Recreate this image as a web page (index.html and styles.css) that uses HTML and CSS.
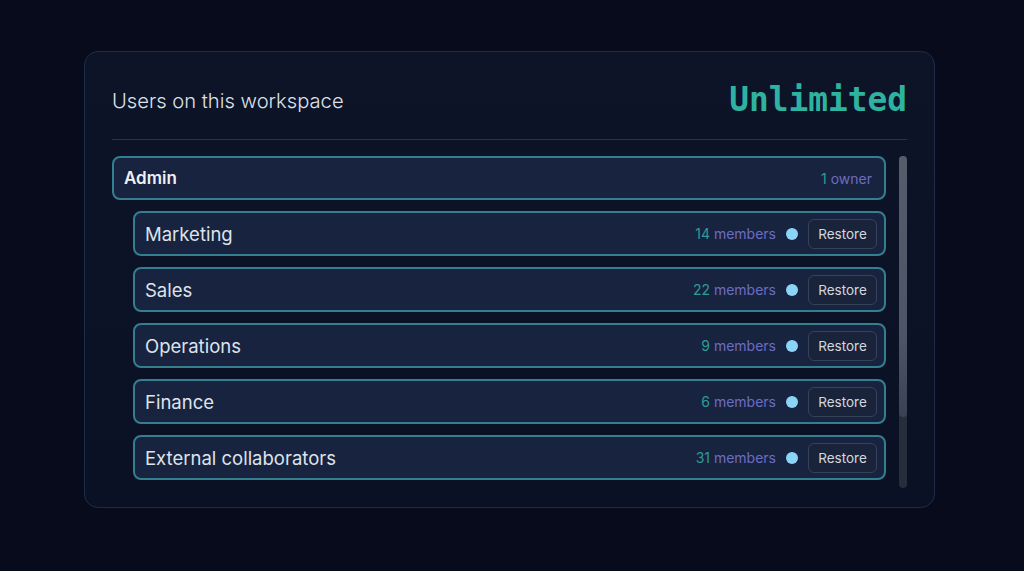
FILE: index.html
```html
<!DOCTYPE html>
<html lang="en">
<head>
    <meta charset="UTF-8">
    <meta name="viewport" content="width=device-width, initial-scale=1.0">
    <title>Workspace users</title>
    <link rel="stylesheet" href="styles.css">
</head>
<body>
    <div class="card">
        <div class="card-head">
            <h2>Users on this workspace</h2>
            <span class="limit">Unlimited</span>
        </div>
        <div class="list-wrap">
            <div class="list">
                <div class="row row-admin">
                    <span class="name">Admin</span>
                    <span class="count"><b>1</b> owner</span>
                </div>
                <div class="row row-group">
                    <span class="name">Marketing</span>
                    <span class="count"><b>14</b> members</span>
                    <i class="dot"></i>
                    <button class="restore">Restore</button>
                </div>
                <div class="row row-group">
                    <span class="name">Sales</span>
                    <span class="count"><b>22</b> members</span>
                    <i class="dot"></i>
                    <button class="restore">Restore</button>
                </div>
                <div class="row row-group">
                    <span class="name">Operations</span>
                    <span class="count"><b>9</b> members</span>
                    <i class="dot"></i>
                    <button class="restore">Restore</button>
                </div>
                <div class="row row-group">
                    <span class="name">Finance</span>
                    <span class="count"><b>6</b> members</span>
                    <i class="dot"></i>
                    <button class="restore">Restore</button>
                </div>
                <div class="row row-group">
                    <span class="name">External collaborators</span>
                    <span class="count"><b>31</b> members</span>
                    <i class="dot"></i>
                    <button class="restore">Restore</button>
                </div>
            </div>
            <div class="track">
                <div class="thumb"></div>
            </div>
        </div>
    </div>
</body>
</html>
```

FILE: styles.css
```css
*{
    padding: 0;
    margin: 0;
    box-sizing: border-box;
}
body{
    width: 1024px;
    height: 571px;
    background-color: #070b1b;
    font-family: Inter, "Noto Sans", sans-serif;
    padding-top: 51px;
    padding-left: 84px;
}
i{
    font-style: normal;
}
.card{
    width: 851px;
    height: 457px;
    padding: 27px 27px 0 27px;
    border: 1px solid #202c46;
    border-radius: 14px;
    background: linear-gradient(180deg, #0d1428 0%, #0b1124 100%);
}
.card-head{
    height: 61px;
    display: flex;
    align-items: center;
    justify-content: space-between;
    border-bottom: 1px solid #1d3a4a;
    padding-bottom: 18px;
}
.card-head h2{
    font-size: 20.2px;
    font-weight: 300;
    color: #dde1e8;
}
.limit{
    font-family: "DejaVu Sans Mono", monospace;
    font-size: 32.8px;
    font-weight: bold;
    color: #2fb3a1;
}
.list-wrap{
    display: flex;
    gap: 13px;
    margin-top: 16px;
}
.list{
    flex: 1;
    display: flex;
    flex-direction: column;
    gap: 11px;
}
.row{
    height: 45px;
    display: flex;
    align-items: center;
    border: 2px solid #347f8d;
    border-radius: 8px;
    background-color: #182340;
    padding: 0 12px 0 10px;
}
.row-admin{
    height: 44px;
}
.row-group{
    margin-left: 21px;
    padding-right: 7px;
}
.name{
    flex: 1;
    font-size: 18.5px;
    color: #dfe3ea;
}
.row-admin .name{
    font-size: 17px;
    font-weight: 600;
    color: #eef0f4;
}
.count{
    font-size: 14px;
    color: #6c6cc2;
}
.count b{
    font-weight: normal;
    color: #2c9c95;
}
.dot{
    width: 12px;
    height: 12px;
    border-radius: 50%;
    background-color: #8cd4f6;
    margin-left: 10px;
}
.restore{
    margin-left: 10px;
    width: 69px;
    height: 30px;
    border: 1px solid #37425a;
    border-radius: 6px;
    background-color: #19233a;
    color: #d3d7df;
    font-family: Inter, "Noto Sans", sans-serif;
    font-size: 13.5px;
}
.track{
    width: 8px;
    height: 332px;
    border-radius: 4px;
    background-color: #262d3d;
}
.thumb{
    height: 261px;
    border-radius: 4px;
    background: linear-gradient(180deg, #555c6c 0%, #4d5465 70%, #3a4152 100%);
}
```
